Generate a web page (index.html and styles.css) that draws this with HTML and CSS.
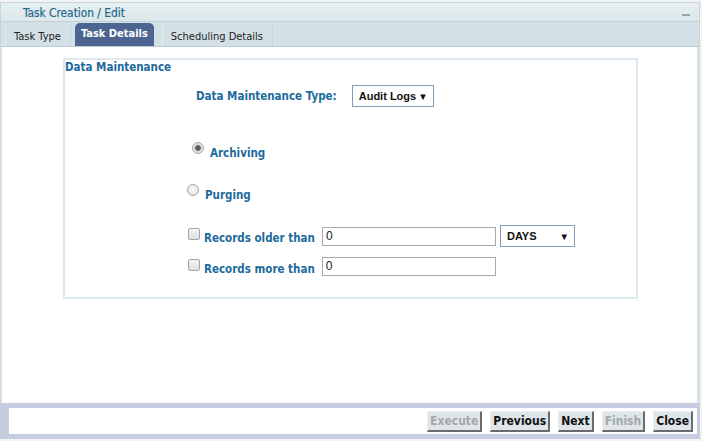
FILE: index.html
```html
<!DOCTYPE html>
<html>
<head>
<meta charset="utf-8">
<link rel="stylesheet" href="styles.css">
</head>
<body>
<div class="window">
  <div class="titlebar">
    <span class="title">Task Creation / Edit</span>
    <span class="minimize"></span>
  </div>
  <div class="tabs">
    <div class="tab">Task Type</div>
    <div class="tab active">Task Details</div>
    <div class="tab">Scheduling Details</div>
  </div>
  <div class="content">
    <div class="fieldset">
      <div class="legend">Data Maintenance</div>
      <div class="row row-type">
        <span class="label">Data Maintenance Type:</span>
        <div class="select select-type"><span>Audit Logs</span><span class="arrow">▼</span></div>
      </div>
      <div class="row row-archiving">
        <span class="radio checked"></span>
        <span class="label">Archiving</span>
      </div>
      <div class="row row-purging">
        <span class="radio"></span>
        <span class="label">Purging</span>
      </div>
      <div class="row row-older">
        <span class="checkbox"></span>
        <span class="label">Records older than</span>
        <div class="input">0</div>
        <div class="select select-days"><span>DAYS</span><span class="arrow">▼</span></div>
      </div>
      <div class="row row-more">
        <span class="checkbox"></span>
        <span class="label">Records more than</span>
        <div class="input">0</div>
      </div>
    </div>
  </div>
  <div class="footer">
    <div class="footer-inner">
      <button class="btn disabled">Execute</button>
      <button class="btn">Previous</button>
      <button class="btn">Next</button>
      <button class="btn disabled">Finish</button>
      <button class="btn">Close</button>
    </div>
  </div>
</div>
</body>
</html>
```
FILE: styles.css
```css
html, body {
  margin: 0;
  padding: 0;
}
body {
  background: #f3f3f3;
  width: 702px;
  height: 441px;
  overflow: hidden;
  font-family: "DejaVu Sans Condensed", "DejaVu Sans", sans-serif;
  font-size: 11.5px;
}
.window {
  margin-top: 2px;
  width: 700px;
  height: 437px;
  display: flex;
  flex-direction: column;
  background: #fff;
  box-sizing: border-box;
}
.titlebar {
  height: 20px;
  box-sizing: border-box;
  border: 1px solid #c7d6dd;
  border-bottom: 1px solid #bfd0d8;
  background: linear-gradient(#e7eff2, #dce8ec);
  display: flex;
  align-items: center;
  justify-content: space-between;
  padding: 1px 9px 0 22px;
}
.title {
  color: #1f6887;
  font-size: 11.8px;
  font-family: "DejaVu Sans Condensed", sans-serif;
  -webkit-text-stroke: 0.2px #1f6887;
}
.minimize {
  width: 8px;
  height: 2px;
  background: #a3a3a3;
  margin-top: 5px;
}
.tabs {
  height: 25px;
  box-sizing: border-box;
  background: #d3e1e6;
  border-left: 1px solid #c7d6dd;
  border-right: 1px solid #c7d6dd;
  border-bottom: 1px solid #bccfd7;
  display: flex;
  align-items: flex-end;
  padding-left: 4px;
  font-size: 11px;
}
.tab {
  height: 21px;
  line-height: 23px;
  padding: 0 9px 0 8px;
  color: #222;
  border-right: 1px solid #c3d4da;
  border-left: 1px solid #e3edf0;
  margin-right: 4px;
}
.tab.active {
  background: #4b6490;
  color: #fff;
  font-weight: bold;
  border: none;
  border-radius: 5px 5px 0 0;
  height: 23px;
  line-height: 21px;
  padding: 0 6px;
  margin-right: 8px;
}
.content {
  flex: 1;
  border-left: 2px solid #d3e1e6;
  border-right: 3px solid #d3e1e6;
  padding: 11px 0 0 61px;
}
.fieldset {
  width: 571px;
  height: 237px;
  border: 2px solid #dde9ef;
}
.legend {
  color: #1e6a9e;
  font-weight: bold;
  height: 14px;
}
.row {
  display: flex;
  align-items: center;
}
.label {
  color: #1d6b9c;
  font-weight: bold;
  white-space: nowrap;
}
.row-type {
  margin-top: 11px;
  padding-left: 131px;
}
.row-type .label {
  margin-right: 15px;
}
.select {
  border: 1px solid #7f9db9;
  box-sizing: border-box;
  display: flex;
  align-items: center;
  justify-content: space-between;
  font-family: "Liberation Sans", Arial, sans-serif;
  font-weight: bold;
  font-size: 11px;
  color: #111;
  padding: 0 5px 0 6px;
  background: #fff;
  white-space: nowrap;
}
.select .arrow {
  font-size: 9.5px;
}
.select-type {
  width: 82px;
  height: 22px;
}
.select-days {
  width: 75px;
  height: 22px;
  margin-left: 4px;
}
.row-archiving {
  margin-top: 36px;
  padding-left: 127px;
}
.row-purging {
  margin-top: 28px;
  padding-left: 122px;
}
.row-older {
  margin-top: 26px;
  padding-left: 123px;
}
.row-more {
  margin-top: 10px;
  padding-left: 123px;
}
.radio {
  width: 12px;
  height: 12px;
  border-radius: 50%;
  box-sizing: border-box;
  border: 1px solid #a9a9a9;
  background: radial-gradient(circle at 50% 40%, #fdfdfd, #dcdcdc);
  margin-right: 6px;
  position: relative;
  top: -2px;
}
.radio.checked {
  background: radial-gradient(circle, #555 0, #666 2.5px, #dcdcdc 3.2px, #f2f2f2 100%);
}
.row-archiving .label,
.row-purging .label {
  position: relative;
  top: 3px;
}
.checkbox {
  width: 12px;
  height: 12px;
  box-sizing: border-box;
  border: 1px solid #a5a5a5;
  border-radius: 2px;
  background: linear-gradient(#f4f4f4, #dedede);
  margin-right: 4px;
  position: relative;
  top: -2px;
}
.row-older .label,
.row-more .label {
  margin-right: 7px;
  position: relative;
  top: 2px;
}
.input {
  width: 174px;
  height: 19px;
  box-sizing: border-box;
  border: 1px solid #a9a9a9;
  font-family: "Liberation Sans", Arial, sans-serif;
  font-size: 12px;
  color: #222;
  padding-left: 3px;
  line-height: 17px;
}
.footer {
  height: 36px;
  background: #c6cde0;
  padding: 5px 3px 5px 7px;
  box-sizing: border-box;
  border-left: 2px solid #c6cde0;
}
.footer-inner {
  height: 26px;
  background: #fff;
  display: flex;
  justify-content: flex-end;
  align-items: center;
  padding-right: 4px;
}
.btn {
  height: 21px;
  margin-left: 8px;
  padding: 0 2px;
  font-family: "DejaVu Sans Condensed", sans-serif;
  font-size: 12px;
  font-weight: bold;
  color: #111;
  background: #dfe6ea;
  border-style: solid;
  border-width: 1px 2px 2px 1px;
  border-color: #e9eef0 #6b6b6b #6b6b6b #e9eef0;
  cursor: pointer;
}
.btn.disabled {
  color: #a4a8aa;
}
```
